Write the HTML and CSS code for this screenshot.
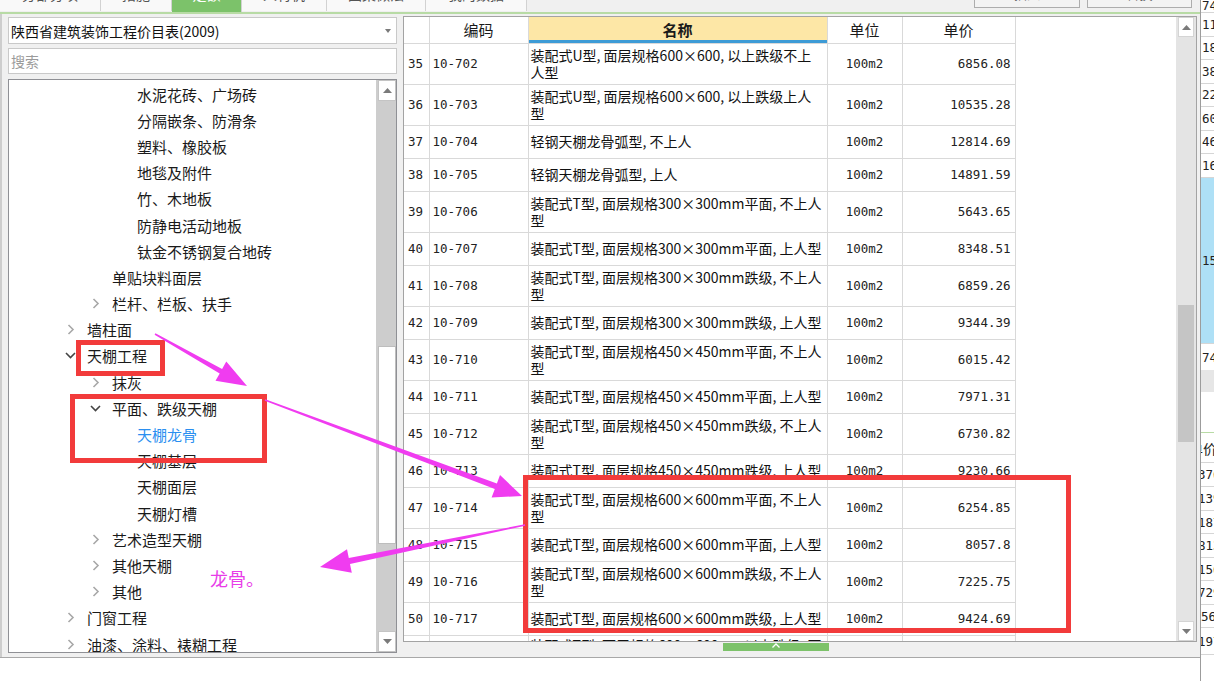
FILE: index.html
```html
<!DOCTYPE html>
<html lang="zh-CN">
<head>
<meta charset="utf-8">
<title>定额</title>
<link rel="stylesheet" href="styles.css">
</head>
<body>
<div class="screen">
  <div class="workspace">
    <div class="topbar">
      <div class="tab t1"><span>分部分项</span></div>
      <div class="tab t2"><span>措施</span></div>
      <div class="tab t3 active"><span>定额</span></div>
      <div class="tab t4"><span>人材机</span></div>
      <div class="tab t5"><span>图集做法</span></div>
      <div class="tab t6"><span>我的数据</span></div>
      <div class="tb-spacer"></div>
      <div class="btn b1"><span>插入</span></div>
      <div class="btn b2"><span>替换</span></div>
    </div>
    <div class="main">
      <aside class="left">
        <div class="combo"><span>陕西省建筑装饰工程价目表(2009)</span><i class="caret"></i></div>
        <div class="search">搜索</div>
        <div class="tree">
          <div class="tree-list">
            <div class="node l3">水泥花砖、广场砖</div>
            <div class="node l3">分隔嵌条、防滑条</div>
            <div class="node l3">塑料、橡胶板</div>
            <div class="node l3">地毯及附件</div>
            <div class="node l3">竹、木地板</div>
            <div class="node l3">防静电活动地板</div>
            <div class="node l3">钛金不锈钢复合地砖</div>
            <div class="node l2 leaf">单贴块料面层</div>
            <div class="node l2"><span class="chev"><svg width="8" height="11" viewBox="0 0 8 11"><path d="M1.5 1 L6 5.5 L1.5 10" fill="none" stroke="#a8a8a8" stroke-width="1.6"/></svg></span>栏杆、栏板、扶手</div>
            <div class="node l1"><span class="chev"><svg width="8" height="11" viewBox="0 0 8 11"><path d="M1.5 1 L6 5.5 L1.5 10" fill="none" stroke="#a8a8a8" stroke-width="1.6"/></svg></span>墙柱面</div>
            <div class="node l1"><span class="chev open"><svg width="11" height="7" viewBox="0 0 11 7"><path d="M1 1 L5.5 5.5 L10 1" fill="none" stroke="#444" stroke-width="1.6"/></svg></span>天棚工程</div>
            <div class="node l2"><span class="chev"><svg width="8" height="11" viewBox="0 0 8 11"><path d="M1.5 1 L6 5.5 L1.5 10" fill="none" stroke="#a8a8a8" stroke-width="1.6"/></svg></span>抹灰</div>
            <div class="node l2"><span class="chev open"><svg width="11" height="7" viewBox="0 0 11 7"><path d="M1 1 L5.5 5.5 L10 1" fill="none" stroke="#444" stroke-width="1.6"/></svg></span>平面、跌级天棚</div>
            <div class="node l3 selected">天棚龙骨</div>
            <div class="node l3">天棚基层</div>
            <div class="node l3">天棚面层</div>
            <div class="node l3">天棚灯槽</div>
            <div class="node l2"><span class="chev"><svg width="8" height="11" viewBox="0 0 8 11"><path d="M1.5 1 L6 5.5 L1.5 10" fill="none" stroke="#a8a8a8" stroke-width="1.6"/></svg></span>艺术造型天棚</div>
            <div class="node l2"><span class="chev"><svg width="8" height="11" viewBox="0 0 8 11"><path d="M1.5 1 L6 5.5 L1.5 10" fill="none" stroke="#a8a8a8" stroke-width="1.6"/></svg></span>其他天棚</div>
            <div class="node l2"><span class="chev"><svg width="8" height="11" viewBox="0 0 8 11"><path d="M1.5 1 L6 5.5 L1.5 10" fill="none" stroke="#a8a8a8" stroke-width="1.6"/></svg></span>其他</div>
            <div class="node l1"><span class="chev"><svg width="8" height="11" viewBox="0 0 8 11"><path d="M1.5 1 L6 5.5 L1.5 10" fill="none" stroke="#a8a8a8" stroke-width="1.6"/></svg></span>门窗工程</div>
            <div class="node l1"><span class="chev"><svg width="8" height="11" viewBox="0 0 8 11"><path d="M1.5 1 L6 5.5 L1.5 10" fill="none" stroke="#a8a8a8" stroke-width="1.6"/></svg></span>油漆、涂料、裱糊工程</div>
          </div>
          <div class="vscroll">
            <div class="sb-btn"><svg width="9" height="5" viewBox="0 0 9 5"><polygon points="0,5 4.5,0 9,5" fill="#7a7a7a"/></svg></div>
            <div class="sb-track t-a"></div>
            <div class="sb-light"></div>
            <div class="sb-track t-fill"></div>
            <div class="sb-btn"><svg width="9" height="5" viewBox="0 0 9 5"><polygon points="0,0 4.5,5 9,0" fill="#7a7a7a"/></svg></div>
          </div>
        </div>
      </aside>
      <section class="grid-panel">
        <div class="grid-box">
          <div class="grid-scroll">
            <table class="grid">
              <colgroup><col class="c-rn"><col class="c-code"><col class="c-name"><col class="c-unit"><col class="c-price"></colgroup>
              <thead>
                <tr class="hd"><th></th><th>编码</th><th class="h-name">名称</th><th>单位</th><th>单价</th></tr>
              </thead>
              <tbody>
                <tr class="d"><td class="rn">35</td><td class="code">10-702</td><td class="name">装配式U型, 面层规格600×600, 以上跌级不上<br>人型</td><td class="unit">100m2</td><td class="price">6856.08</td></tr>
                <tr class="d"><td class="rn">36</td><td class="code">10-703</td><td class="name">装配式U型, 面层规格600×600, 以上跌级上人<br>型</td><td class="unit">100m2</td><td class="price">10535.28</td></tr>
                <tr class="s"><td class="rn">37</td><td class="code">10-704</td><td class="name">轻钢天棚龙骨弧型, 不上人</td><td class="unit">100m2</td><td class="price">12814.69</td></tr>
                <tr class="s"><td class="rn">38</td><td class="code">10-705</td><td class="name">轻钢天棚龙骨弧型, 上人</td><td class="unit">100m2</td><td class="price">14891.59</td></tr>
                <tr class="d"><td class="rn">39</td><td class="code">10-706</td><td class="name">装配式T型, 面层规格300×300mm平面, 不上人<br>型</td><td class="unit">100m2</td><td class="price">5643.65</td></tr>
                <tr class="s"><td class="rn">40</td><td class="code">10-707</td><td class="name">装配式T型, 面层规格300×300mm平面, 上人型</td><td class="unit">100m2</td><td class="price">8348.51</td></tr>
                <tr class="d"><td class="rn">41</td><td class="code">10-708</td><td class="name">装配式T型, 面层规格300×300mm跌级, 不上人<br>型</td><td class="unit">100m2</td><td class="price">6859.26</td></tr>
                <tr class="s"><td class="rn">42</td><td class="code">10-709</td><td class="name">装配式T型, 面层规格300×300mm跌级, 上人型</td><td class="unit">100m2</td><td class="price">9344.39</td></tr>
                <tr class="d"><td class="rn">43</td><td class="code">10-710</td><td class="name">装配式T型, 面层规格450×450mm平面, 不上人<br>型</td><td class="unit">100m2</td><td class="price">6015.42</td></tr>
                <tr class="s"><td class="rn">44</td><td class="code">10-711</td><td class="name">装配式T型, 面层规格450×450mm平面, 上人型</td><td class="unit">100m2</td><td class="price">7971.31</td></tr>
                <tr class="d"><td class="rn">45</td><td class="code">10-712</td><td class="name">装配式T型, 面层规格450×450mm跌级, 不上人<br>型</td><td class="unit">100m2</td><td class="price">6730.82</td></tr>
                <tr class="s"><td class="rn">46</td><td class="code">10-713</td><td class="name">装配式T型, 面层规格450×450mm跌级, 上人型</td><td class="unit">100m2</td><td class="price">9230.66</td></tr>
                <tr class="d"><td class="rn">47</td><td class="code">10-714</td><td class="name">装配式T型, 面层规格600×600mm平面, 不上人<br>型</td><td class="unit">100m2</td><td class="price">6254.85</td></tr>
                <tr class="s"><td class="rn">48</td><td class="code">10-715</td><td class="name">装配式T型, 面层规格600×600mm平面, 上人型</td><td class="unit">100m2</td><td class="price">8057.8</td></tr>
                <tr class="d"><td class="rn">49</td><td class="code">10-716</td><td class="name">装配式T型, 面层规格600×600mm跌级, 不上人<br>型</td><td class="unit">100m2</td><td class="price">7225.75</td></tr>
                <tr class="s"><td class="rn">50</td><td class="code">10-717</td><td class="name">装配式T型, 面层规格600×600mm跌级, 上人型</td><td class="unit">100m2</td><td class="price">9424.69</td></tr>
                <tr class="p"><td class="rn"></td><td class="code"></td><td class="name">装配式T型, 面层规格600×600mm以上跌级, 不上人</td><td class="unit"></td><td class="price"></td></tr>
              </tbody>
            </table>
          </div>
          <div class="vscroll2">
            <div class="sb2-btn"><svg width="9" height="5" viewBox="0 0 9 5"><polygon points="0,5 4.5,0 9,5" fill="#7a7a7a"/></svg></div>
            <div class="sb2-track ta"></div>
            <div class="sb2-thumb"></div>
            <div class="sb2-track tfill"></div>
            <div class="sb2-btn"><svg width="9" height="5" viewBox="0 0 9 5"><polygon points="0,0 4.5,5 9,0" fill="#7a7a7a"/></svg></div>
          </div>
        </div>
        <div class="grid-foot">
          <div class="handle"><svg width="10" height="5" viewBox="0 0 10 5"><path d="M1.5 4.5 L5 1 L8.5 4.5" fill="none" stroke="#ffffff" stroke-width="1.3"/></svg></div>
        </div>
      </section>
    </div>
  </div>
  <div class="peek">
    <div class="pr r0">74</div>
    <div class="pr">11</div>
    <div class="pr">18</div>
    <div class="pr">38</div>
    <div class="pr">22</div>
    <div class="pr">60</div>
    <div class="pr">46</div>
    <div class="pr">16</div>
    <div class="pr blue">15</div>
    <div class="pr r74">74</div>
    <div class="p-gray"></div>
    <div class="p-white"></div>
    <div class="pr phd"><span class="cut">单价</span></div>
    <div class="pr lo"><span class="cut2">376</span></div>
    <div class="pr lo"><span class="cut2">139</span></div>
    <div class="pr lo lo23"><span class="cut2">187</span></div>
    <div class="pr lo"><span class="cut2">813</span></div>
    <div class="pr lo lo23"><span class="cut2">156</span></div>
    <div class="pr lo"><span class="cut2">729</span></div>
    <div class="pr lo lo23"><span class="cut1"> 56</span></div>
    <div class="pr lo lo27"><span class="cut2">197</span></div>
  </div>

  <svg class="annot" width="1214" height="681" viewBox="0 0 1214 681">
    <g fill="none" stroke="#f23b3b" stroke-width="5">
      <rect x="78.5" y="342.5" width="84" height="31"/>
      <rect x="72.5" y="396.5" width="192" height="64"/>
      <rect x="525.5" y="477.5" width="543" height="153"/>
    </g>
    <g fill="#f03cf0">
      <polygon points="154.6,334.7 219.7,373.4 215.5,380.8 247,386 226.3,361.6 222.1,369.0 155.4,333.3"/>
      <polygon points="264.7,400.7 494.8,489.0 491.6,497.4 522,496 500.0,475.0 496.9,483.4 265.3,399.3"/>
      <polygon points="524.9,524.3 348.8,558.1 347.0,549.2 320,567 351.8,572.8 350.0,563.9 525.2,525.7"/>
    </g>
  </svg>
  <div class="annot-note">龙骨。</div>
</div>
</body>
</html>
```

FILE: styles.css
```css
html, body {
  margin: 0;
  padding: 0;
  background: #ffffff;
}

body {
  font-family: "Noto Sans CJK SC", "Noto Sans", sans-serif;
  color: #1a1a1a;
}

.screen {
  position: relative;
  width: 1214px;
  height: 681px;
  display: flex;
  overflow: hidden;
  background: #ffffff;
}

.workspace {
  width: 1200px;
  flex: none;
  display: flex;
  flex-direction: column;
}

/* ---------- top bar ---------- */
.topbar {
  height: 12px;
  flex: none;
  display: flex;
  background: #f0f0f0;
  border-bottom: 2px solid #b8dba5;
  overflow: hidden;
}

.tab {
  height: 11px;
  box-sizing: border-box;
  border-right: 1px solid #d2d2d2;
  background: #f9f9f9;
  overflow: hidden;
  font-size: 14px;
  color: #555555;
  text-align: center;
  flex: none;
}

.tab span {
  display: block;
  margin-top: -16px;
  line-height: 20px;
}

.tab.active {
  height: 12px;
  background: #7cc26a;
  color: #ffffff;
}

.t1 { width: 101px; }
.t2 { width: 71px; }
.t3 { width: 70px; }
.t4 { width: 85px; }
.t5 { width: 99px; }
.t6 { width: 101px; }

.tb-spacer { flex: 1; }

.btn {
  height: 8px;
  box-sizing: border-box;
  border: 1px solid #adadad;
  border-top: 0;
  background: #f3f3f3;
  overflow: hidden;
  font-size: 13px;
  text-align: center;
  color: #666;
  flex: none;
}

.btn span {
  display: block;
  margin-top: -15px;
  line-height: 18px;
}

.b1 { width: 106px; margin-right: 7px; }
.b2 { width: 105px; margin-right: 8px; }

/* ---------- main ---------- */
.main {
  height: 643px;
  flex: none;
  display: flex;
  border-bottom: 1px solid #a8a8a8;
}

.left {
  width: 400px;
  flex: none;
  box-sizing: border-box;
  background: #f0f0f0;
  border-left: 2px solid #cdcdcd;
  padding: 3px 3px 4px 6px;
  display: flex;
  flex-direction: column;
}

.combo {
  height: 27px;
  flex: none;
  box-sizing: border-box;
  border: 1px solid #c9c9c9;
  background: #ffffff;
  display: flex;
  align-items: center;
  padding-left: 2px;
  font-size: 14px;
  color: #111111;
}

.caret {
  margin-left: auto;
  margin-right: 5px;
  width: 0;
  height: 0;
  border-left: 3px solid transparent;
  border-right: 3px solid transparent;
  border-top: 4px solid #7a7a7a;
}

.search {
  height: 26px;
  flex: none;
  margin-top: 4px;
  box-sizing: border-box;
  border: 1px solid #c9c9c9;
  background: #ffffff;
  color: #9b9b9b;
  font-size: 14px;
  padding-left: 2px;
  display: flex;
  align-items: center;
}

.tree {
  margin-top: 5px;
  flex: 1;
  min-height: 0;
  border: 1px solid #8f9095;
  background: #ffffff;
  display: flex;
  overflow: hidden;
}

.tree-list {
  flex: 1;
  overflow: hidden;
  padding-top: 1px;
}

.node {
  height: 26.2px;
  font-size: 15px;
  color: #1a1a1a;
  white-space: nowrap;
  display: flex;
  align-items: center;
}

.l1 { padding-left: 53px; }
.l2 { padding-left: 78px; }
.l2.leaf { padding-left: 103px; }
.l3 { padding-left: 128px; }

.selected { color: #2b8ff0; }

.chev {
  width: 25px;
  flex: none;
  display: flex;
  align-items: center;
}

.chev svg { margin-left: 5px; display: block; }
.chev.open svg { margin-left: 3px; }

.vscroll {
  width: 20px;
  flex: none;
  background: #cdcdcd;
  display: flex;
  flex-direction: column;
}

.sb-btn {
  height: 21px;
  flex: none;
  box-sizing: border-box;
  margin: 0 0 0 2px;
  border: 1px solid #c4c4c4;
  background: #ffffff;
  display: flex;
  align-items: center;
  justify-content: center;
}

.sb-track { background: #cdcdcd; }
.t-a { height: 245px; flex: none; }
.t-fill { flex: 1; }

.sb-light {
  height: 198px;
  flex: none;
  box-sizing: border-box;
  margin-left: 2px;
  border: 1px solid #bdbdbd;
  background: #ffffff;
}

/* ---------- grid ---------- */
.grid-panel {
  width: 800px;
  flex: none;
  box-sizing: border-box;
  background: #f0f0f0;
  padding: 2px 3px 0 3px;
  display: flex;
  flex-direction: column;
}

.grid-box {
  height: 626px;
  flex: none;
  box-sizing: border-box;
  border: 1px solid #a3a3a3;
  background: #ffffff;
  display: flex;
}

.grid-scroll {
  flex: 1;
  overflow: hidden;
}

.grid {
  table-layout: fixed;
  border-collapse: collapse;
  width: 611px;
  font-size: 14px;
}

.c-rn { width: 25px; }
.c-code { width: 99px; }
.c-name { width: 299px; }
.c-unit { width: 75px; }
.c-price { width: 113px; }

.grid th,
.grid td {
  border: 1px solid #d9d9d9;
  padding: 0 3px;
  vertical-align: middle;
  white-space: nowrap;
  overflow: hidden;
  line-height: 17px;
}

.grid tr > :first-child { border-left: 0; }
.grid thead th { border-top: 0; }

.grid tr.hd { height: 26px; }
.grid tr.d { height: 41px; }
.grid tr.s { height: 33px; }
.grid tr.p { height: 41px; }
.grid tr.p td { vertical-align: top; padding-top: 1px; }

.grid th {
  font-weight: normal;
  font-size: 15px;
  color: #1a1a1a;
  text-align: center;
  background: #ffffff;
}

.grid th.h-name {
  background: #fde7a6;
  font-weight: bold;
  box-shadow: inset 0 -3px 0 #3d9bd6;
}

.grid td.name {
  font-size: 14px;
  color: #111;
  padding-left: 2px;
  padding-right: 0;
}

.grid td.rn,
.grid td.code,
.grid td.unit,
.grid td.price {
  font-family: "DejaVu Sans Mono", "Liberation Mono", monospace;
  font-size: 12.5px;
  color: #222;
}

.grid td.rn { padding-left: 4px; padding-right: 0; }
.grid td.code { padding-left: 3px; }
.grid td.unit { text-align: center; }
.grid td.price { text-align: right; padding-right: 4px; }

.vscroll2 {
  width: 20px;
  flex: none;
  background: #e4e4e4;
  display: flex;
  flex-direction: column;
}

.sb2-btn {
  height: 20px;
  flex: none;
  box-sizing: border-box;
  margin: 0 2px;
  display: flex;
  align-items: center;
  justify-content: center;
  background: #ffffff;
  border: 1px solid #d4d4d4;
}

.ta { height: 268px; flex: none; }
.tfill { flex: 1; }

.sb2-thumb {
  height: 137px;
  flex: none;
  margin: 0 2px;
  background: #c5c5c5;
}

.grid-foot {
  flex: 1;
  display: flex;
}

.handle {
  margin-left: 320px;
  margin-top: 1px;
  width: 106px;
  height: 8px;
  background: #7cc26a;
  display: flex;
  justify-content: center;
  align-items: flex-start;
}

.handle svg { display: block; }

/* ---------- right peek ---------- */
.peek {
  width: 14px;
  flex: none;
  box-sizing: border-box;
  border-left: 1px solid #9c9c9c;
  background: #ffffff;
  overflow: hidden;
  display: flex;
  flex-direction: column;
  font-family: "DejaVu Sans Mono", "Liberation Mono", monospace;
  font-size: 12.5px;
  color: #222;
}

.pr {
  height: 23.5px;
  flex: none;
  box-sizing: border-box;
  border-bottom: 1px solid #d6d6d6;
  display: flex;
  align-items: center;
  padding-left: 1px;
  white-space: nowrap;
}

.pr.r0 { height: 13px; align-items: flex-end; line-height: 12px; overflow: hidden; }
.pr.blue { height: 165.5px; background: #aee0f6; border-bottom: 0; }
.pr.r74 { height: 27px; border-top: 1px solid #d6d6d6; border-bottom: 0; }

.p-gray { height: 22px; flex: none; background: #e6e6e6; }
.p-white { height: 40px; flex: none; background: #ffffff; border-bottom: 1px solid #b8dba5; }

.pr.phd { height: 30px; font-family: "Noto Sans CJK SC", sans-serif; font-size: 14px; }
.pr.lo { height: 24px; }
.pr.lo23 { height: 23px; }
.pr.lo27 { height: 27px; }

.cut { margin-left: -13px; }
.cut2 { margin-left: -4px; }
.cut1 { margin-left: -1px; }

/* ---------- annotations (overlay) ---------- */
.annot {
  position: absolute;
  left: 0;
  top: 0;
  pointer-events: none;
}

.annot-note {
  position: absolute;
  left: 210px;
  top: 568px;
  font-size: 18px;
  line-height: 20px;
  color: #e83ce8;
  pointer-events: none;
}
```
